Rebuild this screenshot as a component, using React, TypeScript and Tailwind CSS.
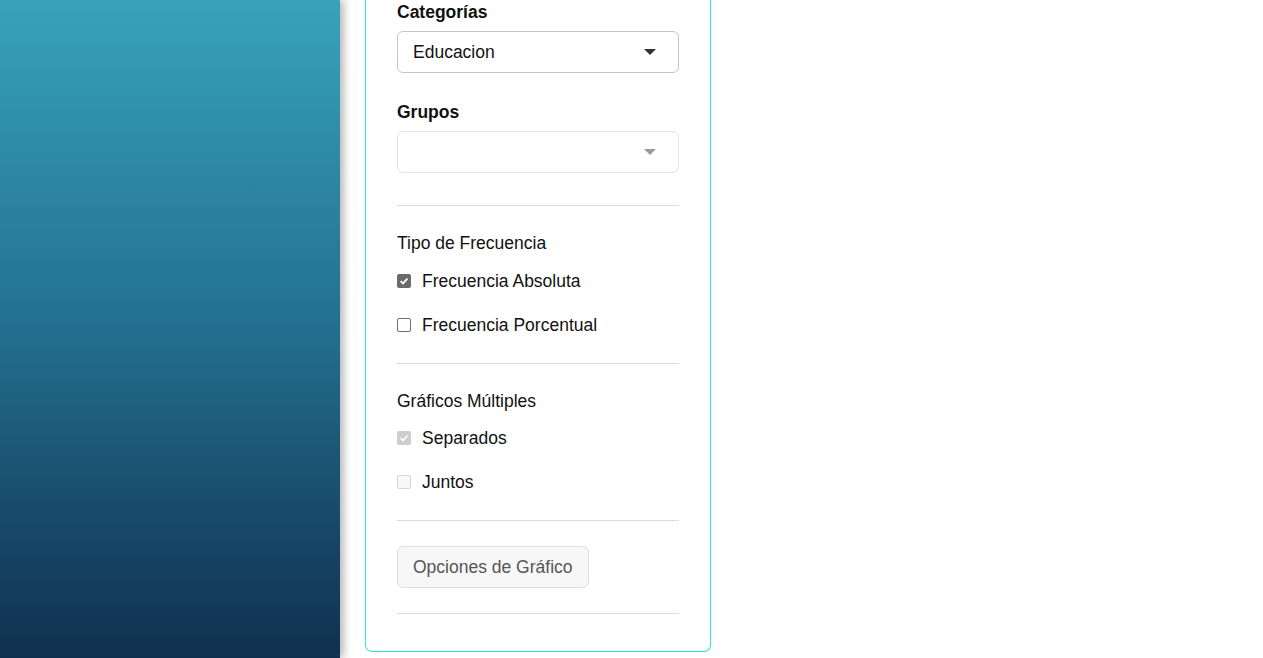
import type { ReactNode } from "react";

const font = { fontFamily: '"Liberation Sans", Arial, sans-serif' };

function Caret({ muted }: { muted?: boolean }) {
  return (
    <svg width="12" height="6" viewBox="0 0 12 6" className="shrink-0">
      <path d="M0 0 L12 0 L6 6 Z" fill={muted ? "#9a9a9a" : "#333333"} />
    </svg>
  );
}

function Select({ value, disabled }: { value?: string; disabled?: boolean }) {
  return (
    <div
      className={`mt-[7px] flex h-[42px] items-center justify-between rounded-[6px] border px-[15px] pr-[22px] ${
        disabled ? "border-[#e3e3e3]" : "border-[#c4c4c4]"
      }`}
    >
      <span className="pt-px text-[17.5px] text-[#111]">{value}</span>
      <Caret muted={disabled} />
    </div>
  );
}

function Box({ checked, disabled }: { checked?: boolean; disabled?: boolean }) {
  if (checked) {
    return (
      <span
        className={`flex h-[14px] w-[14px] shrink-0 items-center justify-center rounded-[2px] ${
          disabled ? "bg-[#cdcdcd]" : "bg-[#6a6a6a]"
        }`}
      >
        <svg width="10" height="10" viewBox="0 0 10 10">
          <path d="M1.6 5.2 L4 7.4 L8.4 2.6" fill="none" stroke="white" strokeWidth="1.8" />
        </svg>
      </span>
    );
  }
  return (
    <span
      className={`h-[14px] w-[14px] shrink-0 rounded-[2px] border ${
        disabled ? "border-[#d6d6d6] bg-[#f8f8f8]" : "border-[#6f6f6f] bg-white"
      }`}
    />
  );
}

function Check({ label, checked, disabled, className }: { label: string; checked?: boolean; disabled?: boolean; className?: string }) {
  return (
    <label className={`flex h-[24px] items-center gap-[11px] text-[17.5px] text-[#111] ${className ?? ""}`}>
      <Box checked={checked} disabled={disabled} />
      <span className="pt-px">{label}</span>
    </label>
  );
}

function Heading({ children, className }: { children: ReactNode; className?: string }) {
  return <div className={`flex h-[24px] items-center pt-px text-[17.5px] text-[#111] ${className ?? ""}`}>{children}</div>;
}

export default function App() {
  return (
    <div className="flex h-[658px] w-[1263px] overflow-hidden bg-white" style={font}>
      <aside className="relative z-10 h-full w-[340px] shrink-0 bg-gradient-to-b from-[#38a3bb] via-[#236f8f] to-[#10304f] shadow-[4px_0_8px_rgba(0,0,0,0.28)]" />

      <div className="ml-[25px] self-start">
        <div className="w-[346px] rounded-b-[7px] border border-t-0 border-[#2fe8cf] px-[31px] pb-[37px]">
          <div className="flex h-[24px] items-center pt-px text-[17.5px] font-bold text-[#111]">Categorías</div>
          <Select value="Educacion" />

          <div className="mt-[27px] flex h-[24px] items-center pt-px text-[17.5px] font-bold text-[#111]">Grupos</div>
          <Select disabled />

          <hr className="mt-[32px] border-[#dcdcdc]" />

          <Heading className="mt-[25px]">Tipo de Frecuencia</Heading>
          <Check className="mt-[14px]" label="Frecuencia Absoluta" checked />
          <Check className="mt-[20px]" label="Frecuencia Porcentual" />

          <hr className="mt-[26px] border-[#dcdcdc]" />

          <Heading className="mt-[25px]">Gráficos Múltiples</Heading>
          <Check className="mt-[13px]" label="Separados" checked disabled />
          <Check className="mt-[20px]" label="Juntos" disabled />

          <hr className="mt-[26px] border-[#dcdcdc]" />

          <button
            type="button"
            className="mt-[25px] flex h-[42px] items-center rounded-[6px] border border-[#dedede] bg-[#f7f7f7] px-[15px] text-[17.5px] text-[#555]"
          >
            Opciones de Gráfico
          </button>

          <hr className="mt-[25px] border-[#dcdcdc]" />
        </div>
      </div>
    </div>
  );
}
